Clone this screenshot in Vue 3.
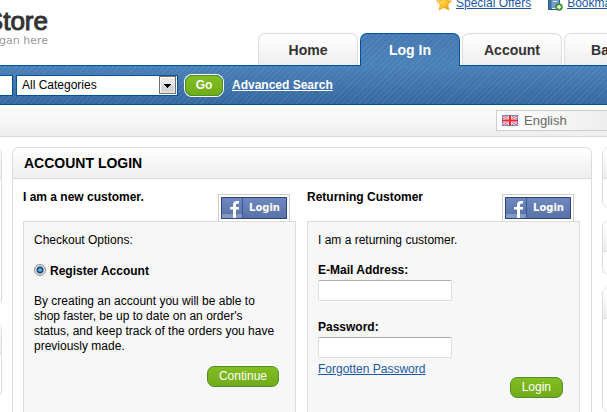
<script setup>
import { ref } from 'vue'

const tabs = ['Home', 'Log In', 'Account', 'Basket']
const activeTab = 'Log In'
const category = ref('All Categories')
const keyword = ref('')
const account = ref('register')
const email = ref('')
const password = ref('')
</script>

<template>
  <div class="page">
    <header class="header">
      <div class="brand">
        <div class="brand-name">Store</div>
        <div class="brand-slogan">Slogan here</div>
      </div>
      <div class="header-side">
        <div class="quick-links">
          <a href="#" class="quick-link">
            <svg width="16" height="16" viewBox="0 0 16 16" aria-hidden="true">
              <defs>
                <linearGradient id="star" x1="0" y1="0" x2="1" y2="1">
                  <stop offset="0" stop-color="#fff08a" />
                  <stop offset="0.55" stop-color="#fbc62c" />
                  <stop offset="1" stop-color="#e58f0c" />
                </linearGradient>
              </defs>
              <path d="M8 .8 10.2 5.5 15.5 6.1 11.7 9.7 12.8 15 8 12.4 3.2 15 4.300 9.700.5 6.100 5.800 5.500Z" fill="url(#star)" stroke="#e2a11c" stroke-width=".8" stroke-linejoin="round" />
            </svg>
            <span>Special Offers</span>
          </a>
          <a href="#" class="quick-link">
            <svg width="16" height="16" viewBox="0 0 16 16" aria-hidden="true">
              <path d="M1.500 1.500h11v13h-11z" fill="#6f9fca" stroke="#2f5c8c" />
              <path d="M2 2h2.500v12H2z" fill="#3f719f" />
              <path d="M6 4.500h5M6 6.500h4" stroke="#dcebf7" />
              <path d="M5 13.500h7" stroke="#e9f1f8" />
              <circle cx="12" cy="12" r="3.500" fill="#4f9a3a" stroke="#3a7a2c" stroke-width=".6" />
              <path d="M12 10v4M10 12h4" stroke="#fff" stroke-width="1.300" />
            </svg>
            <span>Bookmark</span>
          </a>
        </div>
        <nav class="tabs">
          <a v-for="tab in tabs" :key="tab" href="#" class="tab" :class="{ active: tab === activeTab }">{{ tab }}</a>
        </nav>
      </div>
    </header>

    <form class="search" @submit.prevent>
      <input v-model="keyword" class="search-text" type="text" aria-label="Keywords" />
      <span class="picker">
        <select v-model="category" aria-label="Category">
          <option>All Categories</option>
        </select>
        <svg class="picker-arrow" width="17" height="18" viewBox="0 0 17 18" aria-hidden="true">
          <rect x=".5" y=".5" width="16" height="17" fill="#e9e9e9" stroke="#707070" />
          <path d="M1.500 16.500v-15h14" fill="none" stroke="#fff" />
          <path d="M2 9h13v7H2z" fill="#d6d6d6" />
          <path d="M5 8h7v1h-1v1h-1v1H9v1H8v-1H7v-1H6V9H5z" fill="#000" />
        </svg>
      </span>
      <button class="button go" type="submit">Go</button>
      <a href="#" class="advanced">Advanced Search</a>
    </form>

    <div class="toolbar">
      <button class="language" type="button">
        <svg width="16" height="11" viewBox="0 0 16 11" aria-hidden="true">
          <rect width="16" height="11" fill="#7f92d8" />
          <path d="M0 0l16 11M16 0L0 11" stroke="#fbeef2" stroke-width="2.800" />
          <path d="M0 0l16 11M16 0L0 11" stroke="#e8646a" stroke-width="1.200" />
          <path d="M8 0v11M0 5.500h16" stroke="#fbdfe2" stroke-width="3.600" />
          <path d="M8 0v11M0 5.500h16" stroke="#ee2a30" stroke-width="2" />
          <rect x=".5" y=".5" width="15" height="10" fill="none" stroke="#5a5f90" stroke-opacity=".5" />
        </svg>
        <span>English</span>
      </button>
    </div>

    <div class="columns">
      <aside class="side left">
        <section class="panel long"><div class="panel-head"></div></section>
        <section class="panel medium"><div class="panel-head"></div></section>
      </aside>

      <main class="panel main">
        <h1 class="panel-head">Account Login</h1>
        <div class="forms">
          <section class="option">
            <div class="option-head">
              <h2>I am a new customer.</h2>
              <div class="fb-frame">
                <button class="fb" type="button">
                  <svg width="21" height="20" viewBox="0 0 21 20" aria-hidden="true">
                    <rect y="16" width="20" height="4" fill="#8299c8" />
                    <path d="M20.500 0v20" stroke="#3b5591" />
                    <path d="M11 20v-8.500H8V9h3V7q0-4 4-4h2v2.600h-1.500Q14 5.600 14 7.200V9h3v2.500h-3V20z" fill="#fff" />
                  </svg>
                  <span>Login</span>
                </button>
              </div>
            </div>
            <div class="box">
              <p>Checkout Options:</p>
              <label class="choice">
                <input v-model="account" type="radio" name="account" value="register" />
                <b>Register Account</b>
              </label>
              <p>By creating an account you will be able to shop faster, be up to date on an order's status, and keep track of the orders you have previously made.</p>
              <div class="actions"><button class="button" type="button">Continue</button></div>
            </div>
          </section>

          <section class="option">
            <div class="option-head">
              <h2>Returning Customer</h2>
              <div class="fb-frame">
                <button class="fb" type="button">
                  <svg width="21" height="20" viewBox="0 0 21 20" aria-hidden="true">
                    <rect y="16" width="20" height="4" fill="#8299c8" />
                    <path d="M20.500 0v20" stroke="#3b5591" />
                    <path d="M11 20v-8.500H8V9h3V7q0-4 4-4h2v2.600h-1.500Q14 5.600 14 7.200V9h3v2.500h-3V20z" fill="#fff" />
                  </svg>
                  <span>Login</span>
                </button>
              </div>
            </div>
            <form class="box" @submit.prevent>
              <p>I am a returning customer.</p>
              <div class="field">
                <label for="email">E-Mail Address:</label>
                <input id="email" v-model="email" type="text" />
              </div>
              <div class="field second">
                <label for="password">Password:</label>
                <input id="password" v-model="password" type="password" />
              </div>
              <a href="#" class="forgotten">Forgotten Password</a>
              <div class="actions"><button class="button" type="submit">Login</button></div>
            </form>
          </section>
        </div>
      </main>

      <aside class="side right">
        <section class="panel short"><div class="panel-head"></div></section>
        <section class="panel brief"><div class="panel-head"></div></section>
        <section class="panel rest"><div class="panel-head"></div></section>
      </aside>
    </div>
  </div>
</template>

<style>
body {
  margin: 0;
  background: #fff;
}
</style>

<style scoped>
* {
  box-sizing: border-box;
}
.page {
  display: flex;
  flex-direction: column;
  height: 100vh;
  overflow: hidden;
  color: #000;
  font: 12px/15px "Liberation Sans", Arial, sans-serif;
}
h1, h2, p {
  margin: 0;
}
button, input, select {
  font: inherit;
}
.header {
  display: grid;
  grid-template-columns: 48px 1fr;
  column-gap: 210px;
  height: 65px;
  flex: none;
}
.brand {
  display: flex;
  flex-direction: column;
  align-items: flex-end;
  padding-top: 7px;
  overflow: hidden;
  white-space: nowrap;
}
.brand-name {
  color: #333;
  font-size: 26px;
  line-height: 28px;
  -webkit-text-stroke: 1px #333;
}
.brand-slogan {
  color: #999;
  font: 11px/11px "DejaVu Sans", Verdana, sans-serif;
}
.header-side {
  display: flex;
  flex-direction: column;
  justify-content: space-between;
  min-width: 0;
}
.quick-links {
  display: flex;
  gap: 16px;
  margin-top: -5px;
  padding-left: 178px;
  white-space: nowrap;
}
.quick-link {
  display: flex;
  flex: none;
  gap: 4px;
  color: #1b57a3;
  line-height: 16px;
}
.quick-link svg {
  flex: none;
}
.tabs {
  display: flex;
  gap: 2px;
}
.tab {
  display: flex;
  flex: none;
  justify-content: center;
  width: 100px;
  height: 32px;
  border: 1px solid #dbdbdb;
  border-bottom: 0;
  border-radius: 7px 7px 0 0;
  background: linear-gradient(#fff, #eee);
  color: #333;
  font-size: 14px;
  font-weight: bold;
  line-height: 33px;
  text-decoration: none;
}
.tab.active {
  position: relative;
  height: 33px;
  margin-bottom: -1px;
  border-color: #00519c;
  background:
    repeating-linear-gradient(135deg, rgba(255, 255, 255, 0.07) 0 1px, transparent 1px 4px),
    linear-gradient(#457ab2, #4a80b8);
  color: #fff;
}
.search {
  display: flex;
  flex: none;
  align-items: center;
  height: 40px;
  border: solid #00519c;
  border-width: 1px 0;
  background:
    repeating-linear-gradient(135deg, rgba(255, 255, 255, 0.07) 0 1px, transparent 1px 4px),
    linear-gradient(#4a80b8, #36689f);
}
.search-text {
  width: 13px;
  height: 21px;
  padding: 0;
  border: 1px solid #00519c;
  border-left: 0;
  background: #fff;
}
.picker {
  display: grid;
  width: 162px;
  margin: 0 6px 0 3px;
}
.picker select {
  grid-area: 1 / 1;
  width: 100%;
  height: 21px;
  padding: 0 20px 0 5px;
  border: 1px solid #00519c;
  border-radius: 0;
  background: #fff;
  color: #000;
  appearance: none;
}
.picker-arrow {
  grid-area: 1 / 1;
  place-self: center end;
  margin-right: 2px;
  pointer-events: none;
}
.button {
  height: 21px;
  padding: 0 11px;
  border: 1px solid #4c9128;
  border-radius: 7px;
  background: linear-gradient(#82bd22, #71ab19);
  box-shadow: 0 0 0 1px #fff;
  color: #fff;
  line-height: 19px;
}
.button.go {
  width: 38px;
  margin: 0 9px 0 1px;
  padding: 0;
  font-weight: bold;
}
.advanced {
  color: #fff;
  font-weight: bold;
}
.toolbar {
  display: flex;
  flex: none;
  justify-content: flex-end;
  align-items: center;
  height: 32px;
  border-bottom: 1px solid #dbdbdb;
  background: linear-gradient(#fff, #eee);
}
.language {
  display: flex;
  align-items: center;
  gap: 6px;
  width: 111px;
  height: 21px;
  padding: 0 5px;
  border: 1px solid #ccc;
  border-right: 0;
  background: linear-gradient(90deg, #fff, #eee);
  color: #666;
  font-size: 13px;
}
.columns {
  display: grid;
  flex: 1;
  grid-template-columns: 2px 1fr 5px;
  gap: 10px;
  min-height: 0;
  padding-top: 10px;
}
.side {
  display: flex;
  flex-direction: column;
  min-width: 0;
}
.side .panel {
  flex: none;
  width: 180px;
}
.left {
  align-items: flex-end;
  gap: 16px;
}
.right {
  gap: 12px;
}
.panel {
  border: 1px solid #dbdbdb;
  border-radius: 7px;
}
.panel-head {
  height: 31px;
  padding: 0 11px;
  border-bottom: 1px solid #dbdbdb;
  border-radius: 6px 6px 0 0;
  background: linear-gradient(#fff, #eee);
  font-size: 14px;
  line-height: 31px;
  text-transform: uppercase;
}
.long {
  height: 159px;
}
.medium {
  height: 76px;
}
.short {
  height: 61px;
}
.brief {
  height: 55px;
}
.side .rest {
  flex: 1 0 auto;
}
.main {
  display: flex;
  flex-direction: column;
  border-bottom: 0;
  border-radius: 7px 7px 0 0;
}
.forms {
  display: grid;
  flex: 1;
  grid-template-columns: 1fr 1fr;
  gap: 11px;
  padding: 10px 11px 0 10px;
}
.option {
  display: flex;
  flex-direction: column;
}
.option-head {
  display: flex;
  justify-content: space-between;
  height: 32px;
  padding-right: 6px;
}
.option-head h2 {
  font-size: 12px;
  line-height: 16px;
}
.fb-frame {
  align-self: flex-end;
  width: 72px;
  height: 27px;
  padding: 2px;
  border: 1px solid #ccc;
  border-bottom: 0;
}
.fb {
  display: flex;
  align-items: center;
  width: 66px;
  height: 22px;
  padding: 0;
  border: 1px solid #29447e;
  background: linear-gradient(#6f88bd, #5872a7);
  color: #fff;
  font: bold 10px/20px "DejaVu Sans", Verdana, sans-serif;
}
.fb span {
  flex: 1;
}
.box {
  display: flex;
  flex: 1;
  flex-direction: column;
  padding: 11px 16px 0 10px;
  border: 1px solid #dbdbdb;
  border-bottom: 0;
  background: #f7f7f7;
}
.choice {
  display: flex;
  align-items: center;
  gap: 4px;
  margin: 16px 0 15px;
}
.choice input {
  width: 12px;
  height: 12px;
  margin: 0 0 3px;
  border: 1px solid #8e8f8f;
  border-radius: 50%;
  background: #e4e8ec;
  appearance: none;
}
.choice input:checked {
  background: radial-gradient(circle, #6fc3ea 0 1px, #1d6c9c 2px, #123f61 3px, #dfe4e8 4px);
}
.actions {
  display: flex;
  justify-content: flex-end;
  margin-top: 12px;
}
.field {
  display: flex;
  flex-direction: column;
  align-items: flex-start;
  gap: 2px;
  margin-top: 15px;
  font-weight: bold;
}
.field.second {
  margin-top: 19px;
}
.field input {
  width: 134px;
  height: 21px;
  padding: 0 3px;
  border: 1px solid #dcdfe8;
  border-top-color: #abadb3;
  border-radius: 2px;
  background: #fff;
}
.forgotten {
  align-self: flex-start;
  margin-top: 4px;
  color: #1b57a3;
}
.forgotten + .actions {
  margin-top: 0;
}
</style>
